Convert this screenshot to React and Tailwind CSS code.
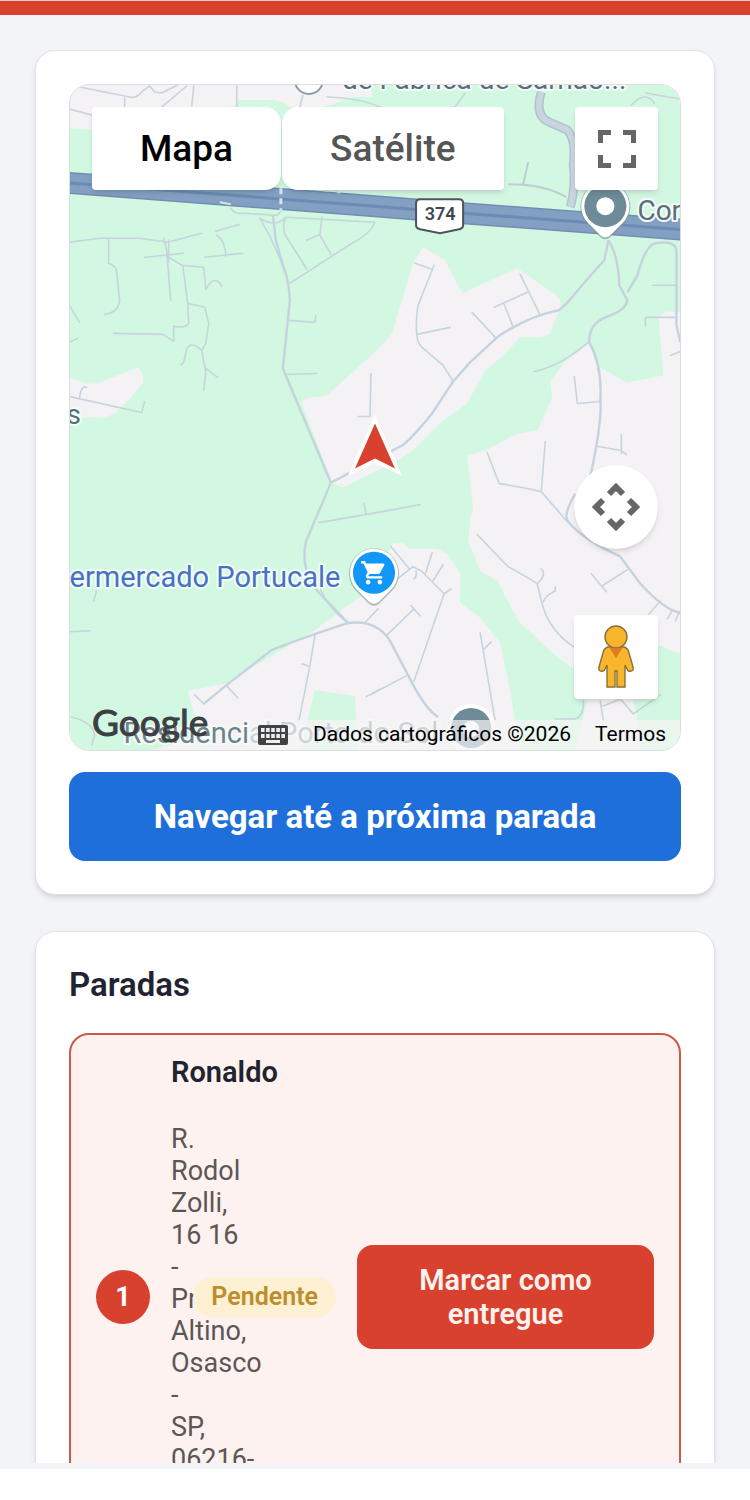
import { MdShoppingCart } from 'react-icons/md'

const LAND = [
  'M70 85H372V97L350 97L335 104L300 112L284 103L275 100H240L228 112L92 130L70 128Z',
  'M423 247L445 260L462 293L517 268L553 293Q562 299 560 307L550 333Q546 338 520 337L503 355L485 370L467 403L443 420L413 450L397 460L343 487L332 482L302 403L305 398L327 395L380 347L392 333L403 297L413 263Z',
  'M588 343L600 367L627 382L663 375L658 317L667 311L680 312V653L660 645L620 660L572 667L553 653L518 620L497 580L480 570L468 540L470 520L473 507L467 455L485 450L517 433L537 430L552 397L550 382L563 363Z',
  'M374 588L392 543L402 542L410 548H437L447 553L460 572V602L480 617L500 642L510 690L520 750H150L200 735L188 690L227 682L317 628L357 598Z',
  'M70 377Q90 385 97 383L138 367Q145 372 143 382Q135 395 115 413Q105 418 97 417H70Z',
  'M587 698L632 698L636 711L640 750H575L583 716Z',
]

const STREETS = [
  // top edge
  'M80 87L130 97Q137 99 143 91L150 86L155 92L162 93L178 85M125 98V107M162 107L187 86M194 86L192 107M237 86V107M70 109L92 115M303 95L300 107M327 97Q360 98 380 107M455 107L465 93M631 105Q645 90 654 103M645 93L680 99',
  // north-west blocks
  'M70 242L100 238H140L168 242L202 233M216 231L240 224M169 240V262M109 239V263Q117 266 117 272L120 300Q119 312 105 314M164 238L167 250L171 300M145 257L184 253M166 255L182 265L204 267L206 289Q215 273 222 286M183 265L188 303L205 307L209 323L206 343L202 350L206 372L204 390M188 303L189 323Q187 328 174 326L174 341L163 334L114 333M202 350Q188 338 186 353Q184 365 181 364M206 368L218 377M70 305L80 322M70 342L78 338M217 235Q226 241 226 256M205 257L243 253',
  // north-centre blocks
  'M231 208Q234 214 242 213L276 215Q281 214 281 208M260 218L271 238L286 272M260 218Q276 228 286 217M286 217L375 222Q370 234 352 243L290 283M286 217Q280 230 290 242L307 269M322 217L320 235L331 254M307 240L320 234M288 320L315 322L316 315M285 374L317 373',
  // middle pocket
  'M415 263L432 269M434 265L418 305Q413 340 422 347L443 365L453 381M417 334L450 327M472 312L496 338M504 304L513 327M494 307L527 292M520 274L540 315M371 373L370 416L358 416',
  // west pocket
  'M70 396L142 412L145 401M80 397Q82 384 87 387M319 522L388 510L420 504M364 503L366 512',
  // east blocks
  'M574 376L577 403L600 401M598 446L621 450L626 454M621 434V453M487 452L499 483Q520 486 541 491L567 521M541 491L545 441M652 285H676M670 355L680 351M645 326V317H676M534 371Q560 366 589 341M477 534L508 566Q530 578 537 583L541 600Q548 630 575 647M537 583Q547 574 541 568M543 601Q545 595 555 590V586M591 573L606 591M602 585L627 569M648 614L660 600M667 618L672 609M675 620L679 611',
  // south blocks
  'M391 546L410 569M386 587L413 566L421 570L444 593L414 680M444 593L451 588M432 552L425 574M433 580L443 564M416 570Q417 576 414 578M386 635L414 608M411 605L420 615M370 694L406 675M480 632L495 720M484 648L491 641M315 635L310 665L299 720M302 663L308 665M195 694L204 703M227 685L238 697M366 696L380 688M319 585Q330 610 348 622M365 622L378 608M97 590L94 600M70 631L91 630M72 716Q95 722 95 735L92 744M583 700Q584 715 575 718H555M600 700L603 720M603 705L620 698L633 713L660 694',
]

const ROADS = [
  'M608 240L604 260Q590 275 575 293Q565 306 558 310Q530 315 498 336L470 362L453 381L432 413Q410 440 402 445L331 482L306 541Q300 570 319 592L348 622',
  'M273 215L276 240L284 268Q289 280 290 300L283 368L331 482',
  'M608 240Q618 255 619 285L627 300Q625 310 610 315Q588 322 589 342Q602 365 600 400Q602 420 590 476M627 292L637 275Q645 245 655 243Q675 240 676 250V325L680 342M575 493Q562 515 568 521Q580 537 620 556L640 583Q665 610 680 612',
  'M204 703L227 684L272 649Q300 638 345 623Q375 617 390 640L410 678Q425 708 438 716',
]

const labelHalo = {
  fontFamily: 'Roboto, sans-serif',
  stroke: '#f4fbf8',
  strokeWidth: 4,
  strokeLinejoin: 'round',
  paintOrder: 'stroke',
}

function Pin({ x, y, color, children }) {
  return (
    <g transform={`translate(${x} ${y})`}>
      <path d="M-17 18A25 25 0 1 1 17 18L5 30Q0 34 -5 30Z" fill="#7d8f98" opacity="0.6" transform="translate(0 1)" />
      <path d="M-17 17A24 24 0 1 1 17 17L5 29Q0 33 -5 29Z" fill="#fff" />
      <circle r="21" fill={color} />
      {children}
    </g>
  )
}

function MapCanvas() {
  return (
    <svg className="absolute inset-0 h-full w-full" viewBox="70 85 610 664" preserveAspectRatio="xMidYMid slice" aria-hidden="true">
      <rect x="-1000" y="85" width="2750" height="664" fill="#d2f8e1" />
      {LAND.map((d) => <path key={d} d={d} fill="#f4f2f4" />)}
      <path d="M315 689L355 695L358 749H300Z" fill="#d2f8e1" />
      <g fill="none" stroke="#c6d5dd" strokeWidth="1.6" strokeLinejoin="round" strokeLinecap="round">
        {STREETS.map((d) => <path key={d} d={d} />)}
      </g>
      <g fill="none" stroke="#c6d3df" strokeWidth="2.4" strokeLinejoin="round">
        {ROADS.map((d) => <path key={d} d={d} />)}
      </g>
      <path d="M541 92Q534 116 549 122L567 130Q576 140 573 165Q576 185 570 207" fill="none" stroke="#b1c2cd" strokeWidth="9" />
      <path d="M541 92Q534 116 549 122L567 130Q576 140 573 165Q576 185 570 207" fill="none" stroke="#c8d5de" strokeWidth="6" />
      <path d="M508 184Q545 184 566 197M523 184L528 162" fill="none" stroke="#bccdd4" strokeWidth="2" />

      {/* highway */}
      <path d="M60 182L375 206L463 213L690 230" fill="none" stroke="#6f8fb3" strokeWidth="22" />
      <path d="M60 182L375 206L463 213L690 230" fill="none" stroke="#83a0c3" strokeWidth="19" />
      <path d="M60 182L375 206L463 213L690 230" fill="none" stroke="#6b8bb4" strokeWidth="3" />
      <path d="M281 188V212" stroke="#d5e2e8" strokeWidth="3" strokeDasharray="6 4" />
      <path d="M220 202L231 204M325 191L332 188L340 193" fill="none" stroke="#d5e2e8" strokeWidth="2" />
      <path d="M420 199H459Q463 199 463 203V225Q463 228 459 229L440 233L420 229Q416 228 416 225V203Q416 199 420 199Z" fill="#fff" stroke="#4b545a" strokeWidth="2" />
      <text x="440" y="220" textAnchor="middle" fontSize="18" fontWeight="600" fill="#3f474c" fontFamily="Roboto, sans-serif">374</text>

      <circle cx="309" cy="80" r="14" fill="#fff" stroke="#8b9ca6" strokeWidth="2" />
      <text x="342" y="89" fontSize="28" fill="#5a6e79" style={labelHalo}>de Fábrica de Samao...</text>
      <Pin x={605} y={206} color="#6f8b99"><circle r="9" fill="#fff" /></Pin>
      <text x="637" y="220" fontSize="28" fill="#5a6e79" style={labelHalo}>Con</text>
      <text x="67" y="424" fontSize="28" fill="#5a6e79" style={labelHalo}>s</text>
      <text x="70" y="586" fontSize="29" fill="#4473c5" style={labelHalo}>ermercado Portucale</text>
      <Pin x={374} y={572} color="#1197f7">
        <MdShoppingCart x="-14" y="-14" size={28} color="#fff" />
      </Pin>
      <circle cx="471" cy="727" r="24" fill="#fff" />
      <circle cx="471" cy="727" r="20" fill="#6f8b99" />
      <circle cx="471" cy="728" r="8" fill="#fff" />
      <text x="124" y="742" fontSize="29" fill="#71808c" style={labelHalo}>Residencial Porto do Sol</text>

      {/* current position */}
      <path d="M375 424L394 467L375 458L356 467Z" fill="#fff" stroke="#fff" strokeWidth="8" strokeLinejoin="miter" strokeMiterlimit="3" />
      <path d="M375 423L395 468L375 458L355 468Z" fill="#d8412e" />
    </svg>
  )
}

function PegmanIcon() {
  return (
    <svg viewBox="0 0 38 64" className="h-16 w-10" aria-hidden="true">
      <path d="M11 22H27Q31 23 32 28L36 42Q37 46 34 46Q31 47 30 44L28 40V62H20V46H18V62H10V40L8 44Q7 47 4 46Q1 46 2 42L6 28Q7 23 11 22Z" fill="#f9b62d" stroke="#8a7038" strokeWidth="1.4" />
      <circle cx="19" cy="12" r="11" fill="#f9b62d" stroke="#8a7038" strokeWidth="1.4" />
      <path d="M12 22Q19 25 26 22L19 33Z" fill="#e07b1c" />
    </svg>
  )
}

function DeliveryMap() {
  return (
    <div className="relative h-[667px] overflow-hidden rounded-[20px] border border-[#dcdfe2]">
      <MapCanvas />

      <div className="absolute inset-x-[22px] top-[22px] flex items-start justify-between">
        <div className="flex gap-px text-[37px] leading-[83px] font-medium">
          <button className="rounded-l-[4px] rounded-r-2xl bg-white px-12 text-black shadow-md">Mapa</button>
          <button className="rounded-l-2xl rounded-r-[4px] bg-white px-12 text-[#565656] shadow-md">Satélite</button>
        </div>
        <button aria-label="Tela cheia" className="flex size-[83px] items-center justify-center rounded-[4px] bg-white shadow-md">
          <svg viewBox="0 0 38 38" className="size-[38px]" fill="none" stroke="#666" strokeWidth="5">
            <path d="M2.500 13V2.500H13M25 2.500H35.500V13M35.500 25V35.500H25M13 35.500H2.500V25" />
          </svg>
        </button>
      </div>

      <div className="absolute right-[22px] bottom-[51px] flex flex-col gap-[66px]">
        <button aria-label="Controles da câmera" className="flex size-[84px] items-center justify-center rounded-full bg-white shadow-md">
          <svg viewBox="0 0 48 48" className="size-12" fill="none" stroke="#666" strokeWidth="6">
            <path d="M17 11L24 4L31 11M17 37L24 44L31 37M11 17L4 24L11 31M37 17L44 24L37 31" />
          </svg>
        </button>
        <button aria-label="Street View" className="flex size-[84px] items-center justify-center rounded-[4px] bg-white shadow-md">
          <PegmanIcon />
        </button>
      </div>

      <div className="absolute inset-x-0 bottom-0 flex items-end justify-between text-[21px] text-black">
        <a href="#google" className="pb-1 pl-[22px] font-[Lato] text-[37px] leading-[48px] text-[#3c4043] [-webkit-text-stroke:1px_#3c4043]">Google</a>
        <div className="flex h-[30px] items-center bg-[#f5f5f5]/70 pr-[14px] pl-2">
          <button aria-label="Atalhos do teclado" className="mr-6">
            <svg viewBox="0 0 32 20" className="h-5 w-8" aria-hidden="true">
              <rect x="1" y="0" width="30" height="20" rx="2" fill="#3f4346" />
              <path d="M4 5H28M4 11H28" stroke="#eee" strokeWidth="4" strokeDasharray="3.600 1.500" />
              <path d="M9 16.500H23" stroke="#eee" strokeWidth="3" />
            </svg>
          </button>
          <span>Dados cartográficos ©2026</span>
          <a href="#termos" className="ml-6">Termos</a>
        </div>
      </div>
    </div>
  )
}

function StopItem({ stop }) {
  return (
    <li className="flex items-center gap-[21px] rounded-[20px] border-2 border-[#cd5748] bg-[#fef2f0] px-[25px] py-5">
      <span className="flex size-[54px] shrink-0 items-center justify-center rounded-full bg-[#d8412e] text-[27px] font-bold text-white">{stop.number}</span>
      <div className="min-w-0 flex-1">
        <h3 className="mb-[34px] text-[29px] leading-[34px] font-semibold text-[#1f2430]">{stop.name}</h3>
        <p className="text-[27px] leading-8 text-[#5c5654]">{stop.address}</p>
      </div>
      <span className="shrink-0 rounded-full bg-[#fdf0d3] px-[18px] text-[25px] leading-10 font-semibold text-[#bd8d2b]">{stop.status}</span>
      <button className="w-[297px] shrink-0 rounded-2xl bg-[#d8412e] px-12 py-[18px] text-[29px] leading-[34px] font-semibold text-[#fff1ee]">
        Marcar como entregue
      </button>
    </li>
  )
}

const STOPS = [
  {
    number: 1,
    name: 'Ronaldo',
    address: 'R. Rodol Zolli, 16\u00a016 - Presidente Altino, Osasco - SP, 06216- 010, Brasil',
    status: 'Pendente',
  },
]

export default function App() {
  return (
    <div className="flex h-screen flex-col bg-white font-[Roboto,sans-serif] text-[#1f2430]">
      <header className="h-[15px] shrink-0 border-t border-[#f3c9c4] bg-[#d8412e]" />

      <main className="flex min-h-0 flex-1 flex-col gap-9 overflow-y-auto bg-[#f2f4f7] px-[35px] pt-[35px] [scrollbar-width:none]">
        <section className="shrink-0 rounded-[20px] border border-[#e0e2e5] bg-white p-[33px] shadow-md">
          <DeliveryMap />
          <button className="mt-[21px] w-full rounded-2xl bg-[#1f6fdb] text-[33px] leading-[89px] font-bold text-white">
            Navegar até a próxima parada
          </button>
        </section>

        <section className="shrink-0 rounded-[20px] border border-[#e0e2e5] bg-white p-[33px] shadow-md">
          <h2 className="mb-7 text-[33px] leading-10 font-semibold">Paradas</h2>
          <ul>
            {STOPS.map((stop) => <StopItem key={stop.number} stop={stop} />)}
          </ul>
        </section>
      </main>

      <footer className="h-[37px] shrink-0 border-t-6 border-[#f2f4f7] bg-white" />
    </div>
  )
}
